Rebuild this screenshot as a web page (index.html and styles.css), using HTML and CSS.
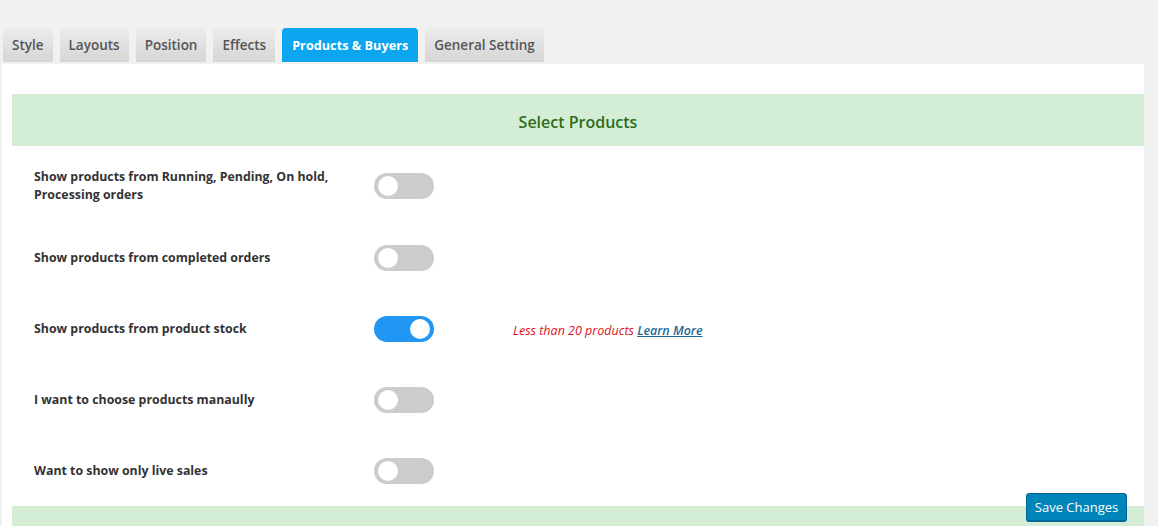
FILE: index.html
```html
<!DOCTYPE html>
<html>
<head>
<meta charset="utf-8">
<link rel="stylesheet" href="styles.css">
</head>
<body>
<div class="wrap">
  <nav class="tabs">
    <a class="tab">Style</a>
    <a class="tab">Layouts</a>
    <a class="tab">Position</a>
    <a class="tab">Effects</a>
    <a class="tab active">Products &amp; Buyers</a>
    <a class="tab">General Setting</a>
  </nav>
  <div class="panel">
    <div class="section-head">Select Products</div>
    <div class="rows">
      <div class="row">
        <div class="label">Show products from Running, Pending, On hold, Processing orders</div>
        <div class="ctrl"><span class="switch"><span class="knob"></span></span></div>
      </div>
      <div class="row">
        <div class="label">Show products from completed orders</div>
        <div class="ctrl"><span class="switch"><span class="knob"></span></span></div>
      </div>
      <div class="row">
        <div class="label">Show products from product stock</div>
        <div class="ctrl"><span class="switch on"><span class="knob"></span></span></div>
        <div class="note">Less than 20 products <a class="learn">Learn More</a></div>
      </div>
      <div class="row">
        <div class="label">I want to choose products manaully</div>
        <div class="ctrl"><span class="switch"><span class="knob"></span></span></div>
      </div>
      <div class="row">
        <div class="label">Want to show only live sales</div>
        <div class="ctrl"><span class="switch"><span class="knob"></span></span></div>
      </div>
    </div>
    <div class="section-head next"></div>
  </div>
  <button class="save">Save Changes</button>
</div>
</body>
</html>
```
FILE: styles.css
```css
html, body {
  margin: 0;
  padding: 0;
  background: #f1f1f1;
  font-family: "Open Sans", "Noto Sans", sans-serif;
  overflow: hidden;
}
.wrap {
  position: relative;
  height: 526px;
  padding: 28px 14px 0 2px;
  box-sizing: border-box;
  overflow: hidden;
}
.tabs {
  display: flex;
  gap: 7px;
  padding-left: 1px;
  height: 34px;
  align-items: flex-end;
}
.tab {
  display: block;
  height: 34px;
  line-height: 34px;
  padding: 0 9px;
  font-size: 13.5px;
  font-weight: 600;
  color: #555;
  background: linear-gradient(#ececec, #d5d5d5);
  border-radius: 4px 4px 0 0;
  box-sizing: border-box;
  white-space: nowrap;
}
.tab.active {
  background: #0ca5f0;
  color: #fff;
  font-weight: 700;
  font-size: 12.7px;
  padding: 0 10px;
}
.panel {
  margin-top: 2px;
  background: #fff;
  padding: 30px 0 0 10px;
  height: 500px;
  box-sizing: border-box;
}
.section-head {
  background: #d4edd5;
  height: 52px;
  padding-top: 3px;
  box-sizing: border-box;
  display: flex;
  align-items: center;
  justify-content: center;
  font-size: 16px;
  font-weight: 600;
  color: #2c6e1c;
}
.rows {
  margin-top: 4px;
  padding-left: 22px;
}
.row {
  display: grid;
  grid-template-columns: 340px 139px auto;
  align-items: center;
  min-height: 71px;
  padding: 18px 0;
  box-sizing: border-box;
}
.label {
  font-size: 12.35px;
  font-weight: 700;
  color: #333;
  line-height: 18px;
  max-width: 310px;
}
.switch {
  display: block;
  position: relative;
  width: 60px;
  height: 26px;
  border-radius: 13px;
  background: #ccc;
}
.switch.on {
  background: #2196f3;
}
.knob {
  position: absolute;
  top: 3px;
  left: 4px;
  width: 20px;
  height: 20px;
  border-radius: 50%;
  background: #fff;
}
.switch.on .knob {
  left: 36px;
}
.note {
  font-size: 12.5px;
  font-style: italic;
  color: #e0101e;
  padding-top: 3px;
}
.learn {
  color: #1e6a96;
  text-decoration: underline;
  font-weight: 600;
}
.save {
  position: absolute;
  left: 1026px;
  top: 493px;
  width: 101px;
  height: 28px;
  background: #0085ba;
  border: 1px solid #006799;
  border-radius: 3px;
  color: #fff;
  font-family: "Open Sans", "Noto Sans", sans-serif;
  font-size: 13px;
  padding: 0;
  box-shadow: 0 1px 0 #006799;
}
```
